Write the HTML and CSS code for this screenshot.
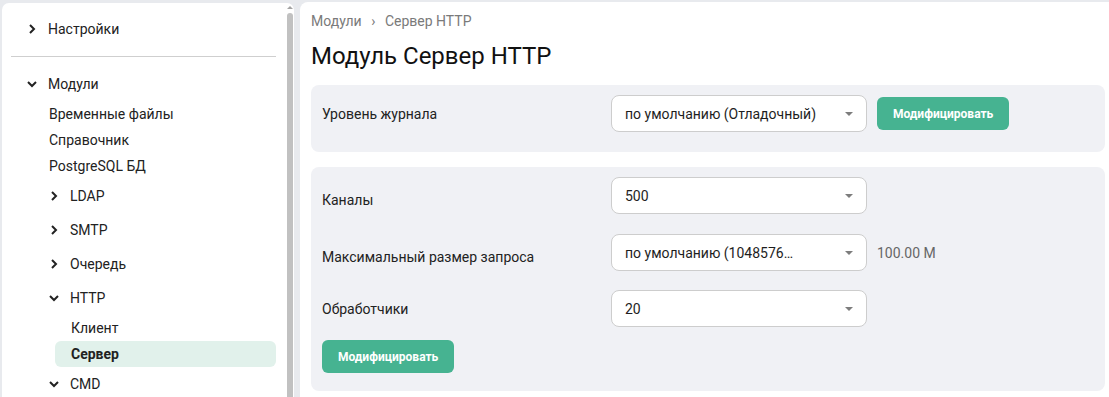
FILE: index.html
```html
<!DOCTYPE html>
<html lang="ru">
<head>
  <meta charset="UTF-8" />
  <meta name="viewport" content="width=device-width, initial-scale=1.0"/>
  <title>Модуль Сервер HTTP</title>
  <link rel="stylesheet" href="styles.css">
</head>
<body>

<div class="layout">
  <!-- Sidebar tree -->
  <aside class="sidebar">
    <nav class="tree">
      <div class="tree-head lvl-0">
        <svg class="chev" width="10" height="10" viewBox="0 0 10 10"><polyline points="3,1 7,5 3,9"/></svg>
        <span>Настройки</span>
      </div>
      <div class="tree-divider"></div>
      <div class="tree-head lvl-0">
        <svg class="chev" width="10" height="10" viewBox="0 0 10 10"><polyline points="1,3 5,7 9,3"/></svg>
        <span>Модули</span>
      </div>
      <div class="tree-leaf lvl-1">Временные файлы</div>
      <div class="tree-leaf lvl-1">Справочник</div>
      <div class="tree-leaf lvl-1">PostgreSQL БД</div>
      <div class="tree-head lvl-1">
        <svg class="chev" width="10" height="10" viewBox="0 0 10 10"><polyline points="3,1 7,5 3,9"/></svg>
        <span>LDAP</span>
      </div>
      <div class="tree-head lvl-1">
        <svg class="chev" width="10" height="10" viewBox="0 0 10 10"><polyline points="3,1 7,5 3,9"/></svg>
        <span>SMTP</span>
      </div>
      <div class="tree-head lvl-1">
        <svg class="chev" width="10" height="10" viewBox="0 0 10 10"><polyline points="3,1 7,5 3,9"/></svg>
        <span>Очередь</span>
      </div>
      <div class="tree-head lvl-1">
        <svg class="chev" width="10" height="10" viewBox="0 0 10 10"><polyline points="1,3 5,7 9,3"/></svg>
        <span>HTTP</span>
      </div>
      <div class="tree-leaf lvl-2">Клиент</div>
      <div class="tree-leaf lvl-2 active">Сервер</div>
      <div class="tree-head lvl-1">
        <svg class="chev" width="10" height="10" viewBox="0 0 10 10"><polyline points="1,3 5,7 9,3"/></svg>
        <span>CMD</span>
      </div>
    </nav>
    <div class="scrollbar">
      <div class="scroll-arrow"></div>
      <div class="scroll-thumb"></div>
    </div>
  </aside>

  <!-- Main content -->
  <main class="main">
    <div class="breadcrumb">
      <span>Модули</span>
      <span class="crumb-sep">›</span>
      <span>Сервер HTTP</span>
    </div>
    <h1 class="page-title">Модуль Сервер HTTP</h1>

    <section class="card">
      <div class="field-row">
        <label class="field-label">Уровень журнала</label>
        <div class="select">
          <span class="select-value">по умолчанию (Отладочный)</span>
          <span class="select-caret"></span>
        </div>
        <button type="button" class="btn">Модифицировать</button>
      </div>
    </section>

    <section class="card card-form">
      <div class="field-row">
        <label class="field-label low">Каналы</label>
        <div class="select">
          <span class="select-value">500</span>
          <span class="select-caret"></span>
        </div>
      </div>
      <div class="field-row">
        <label class="field-label low">Максимальный размер запроса</label>
        <div class="select">
          <span class="select-value">по умолчанию (1048576…</span>
          <span class="select-caret"></span>
        </div>
        <span class="field-hint">100.00 M</span>
      </div>
      <div class="field-row">
        <label class="field-label">Обработчики</label>
        <div class="select">
          <span class="select-value">20</span>
          <span class="select-caret"></span>
        </div>
      </div>
      <div class="form-actions">
        <button type="button" class="btn">Модифицировать</button>
      </div>
    </section>
  </main>
</div>

</body>
</html>
```

FILE: styles.css
```css
html, body {
  margin: 0;
  height: 100%;
}

body {
  font-family: Roboto, "Noto Sans", Arial, sans-serif;
  background: #e8eaee;
  color: #222;
  overflow: hidden;
}

.layout {
  display: flex;
  gap: 6px;
  height: 100vh;
  padding: 3px 0 0 2px;
  box-sizing: border-box;
}

/* Sidebar */

.sidebar {
  display: flex;
  width: 292px;
  flex-shrink: 0;
  background: #fff;
  border-radius: 7px 7px 0 0;
  overflow: hidden;
}

.tree {
  flex: 1;
  padding: 9px 8px 0 0;
  font-size: 14px;
}

.tree-head {
  display: flex;
  align-items: center;
  height: 34px;
  gap: 11px;
}

.tree-head.lvl-0 { padding-left: 25px; }
.tree-head.lvl-1 { padding-left: 47px; }

.chev {
  flex-shrink: 0;
}

.chev polyline {
  fill: none;
  stroke: #222;
  stroke-width: 2;
}

.tree-divider {
  height: 1px;
  background: #cfcfcf;
  margin: 10px 0 10px 9px;
}

.tree-leaf {
  height: 26px;
  line-height: 26px;
  padding-left: 16px;
  border-radius: 6px;
}

.tree-leaf.lvl-1 { margin-left: 31px; }
.tree-leaf.lvl-2 { margin-left: 53px; }

.tree-leaf.active {
  background: #e1f1eb;
  font-weight: bold;
}

.scrollbar {
  width: 10px;
  flex-shrink: 0;
}

.scroll-arrow {
  width: 0;
  height: 0;
  margin: 3px 0 0 3px;
  border-left: 3px solid transparent;
  border-right: 3px solid transparent;
  border-bottom: 3px solid #a3a3a3;
}

.scroll-thumb {
  width: 6px;
  margin: 4px 0 0 3px;
  height: 100%;
  background: #c1c1c1;
  border-radius: 3px 3px 0 0;
}

/* Main */

.main {
  flex: 1;
  background: #fff;
  border-radius: 8px 0 0 0;
  padding: 9px 4px 0 11px;
  margin-top: -1px;
}

.breadcrumb {
  font-size: 14px;
  line-height: 20px;
  color: #7a7a7a;
}

.crumb-sep {
  margin: 0 6px;
}

.page-title {
  margin: 9px 0 13px;
  font-size: 24px;
  line-height: 32px;
  font-weight: 400;
  color: #111;
}

.card {
  background: #f0f1f5;
  border-radius: 8px;
  padding: 10px 11px 20px;
  margin-bottom: 15px;
}

.card-form {
  padding-bottom: 18px;
}

.field-row {
  display: flex;
  align-items: center;
}

.card-form .field-row + .field-row {
  margin-top: 20px;
}

.card-form .field-row:nth-child(3) {
  margin-top: 19px;
}

.field-label {
  width: 289px;
  flex-shrink: 0;
  font-size: 14px;
}

.field-label.low {
  padding-top: 8px;
}

.select {
  display: flex;
  align-items: center;
  justify-content: space-between;
  width: 256px;
  height: 37px;
  box-sizing: border-box;
  padding: 0 13px;
  background: #fff;
  border: 1px solid #cdcdcd;
  border-radius: 8px;
  font-size: 14px;
  color: #1e1e1e;
}

.select-caret {
  width: 0;
  height: 0;
  border-left: 4px solid transparent;
  border-right: 4px solid transparent;
  border-top: 4px solid #7d7d7d;
}

.field-hint {
  margin-left: 10px;
  font-size: 14px;
  color: #666;
}

.btn {
  height: 33px;
  padding: 0 16px;
  margin-left: 10px;
  background: #46b391;
  color: #fff;
  border: none;
  border-radius: 6px;
  font-family: inherit;
  font-size: 12px;
  font-weight: bold;
  cursor: pointer;
}

.form-actions {
  margin-top: 13px;
}

.form-actions .btn {
  margin-left: 0;
}
```
